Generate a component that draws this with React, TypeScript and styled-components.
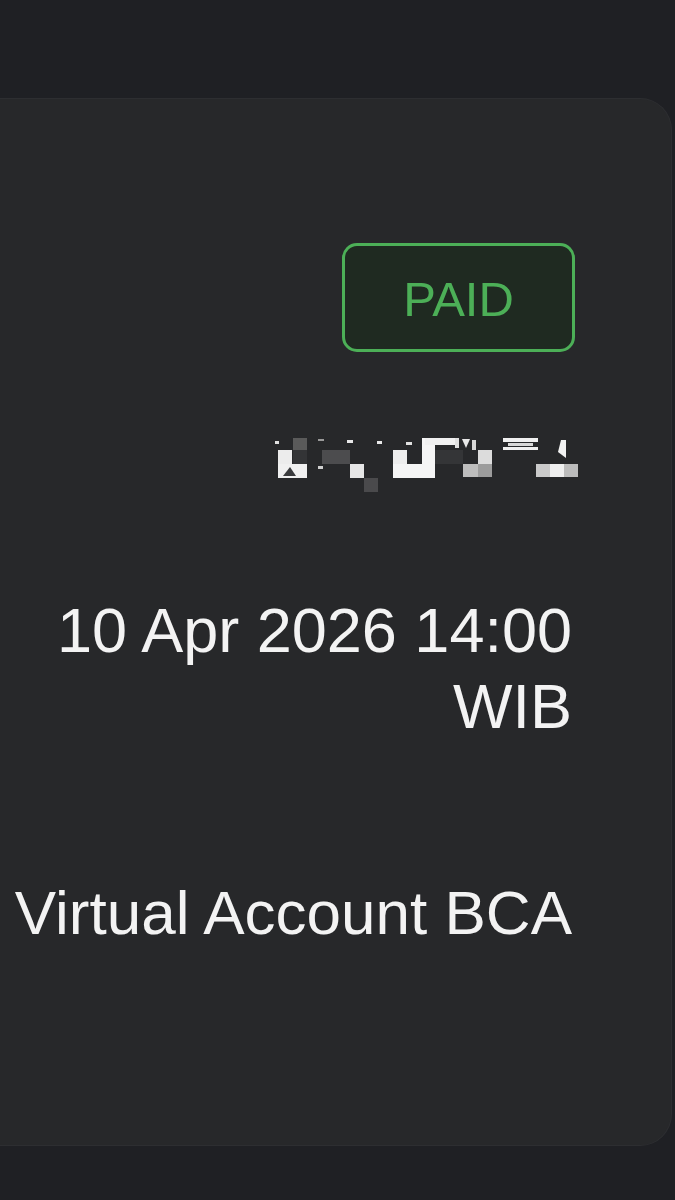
import React from "react";
import styled, { createGlobalStyle } from "styled-components";

const GlobalStyle = createGlobalStyle`
  html, body {
    margin: 0;
    padding: 0;
    background: #1f2024;
    overflow: hidden;
  }
  body {
    font-family: "Liberation Sans", Arial, Helvetica, sans-serif;
    -webkit-font-smoothing: antialiased;
  }
`;

const Page = styled.div`
  width: 675px;
  height: 1200px;
  display: flex;
  flex-direction: column;
  background: #1f2024;
`;

const Card = styled.section`
  margin: 98px 3px 0 -40px;
  padding: 144px 99px 194px 0;
  background: #27282a;
  border: 1px solid #2d2e31;
  border-left: none;
  border-radius: 0 32px 32px 0;
  display: flex;
  flex-direction: column;
  align-items: flex-end;
`;

const Row = styled.div<{ $gap: number }>`
  margin-top: ${(p) => p.$gap}px;
  display: flex;
  justify-content: flex-end;
`;

const Badge = styled.div`
  box-sizing: border-box;
  width: 233px;
  height: 109px;
  margin-right: -3px;
  padding-top: 4px;
  border: 3px solid #4caf57;
  border-radius: 15px;
  background: #1f2a21;
  color: #4caf57;
  font-size: 49px;
  line-height: 1;
  display: flex;
  align-items: center;
  justify-content: center;
`;

const Masked = styled.svg`
  display: block;
  width: 310px;
  height: 65px;
  margin-right: -8px;
`;

const Value = styled.div<{ $size: number; $maxWidth?: number }>`
  max-width: ${(p) => (p.$maxWidth ? `${p.$maxWidth}px` : "none")};
  color: #f3f3f3;
  font-size: ${(p) => p.$size}px;
  line-height: 76px;
  text-align: right;
  white-space: ${(p) => (p.$maxWidth ? "normal" : "nowrap")};
`;

type Block = [number, number, number, number, string];

const blocks: Block[] = [
  [278, 450, 14, 14, "#ececec"],
  [278, 464, 29, 14, "#f0f0f0"],
  [293, 438, 14, 12, "#5a5a5a"],
  [293, 450, 14, 14, "#333436"],
  [322, 450, 28, 14, "#4c4c4e"],
  [350, 464, 14, 14, "#e6e6e6"],
  [364, 478, 14, 14, "#4a4a4c"],
  [393, 450, 14, 14, "#ededed"],
  [393, 464, 42, 14, "#f5f5f5"],
  [422, 438, 13, 26, "#f5f5f5"],
  [435, 450, 28, 14, "#343537"],
  [478, 450, 14, 14, "#dcdcdc"],
  [463, 464, 15, 13, "#bdbdbd"],
  [478, 464, 14, 13, "#9c9c9c"],
  [536, 464, 14, 13, "#cacaca"],
  [550, 464, 14, 13, "#efefef"],
  [564, 464, 14, 13, "#bcbcbc"],
];

const MaskedText = () => (
  <Masked viewBox="270 430 310 65" aria-label="masked value">
    {blocks.map(([x, y, w, h, c], i) => (
      <rect key={i} x={x} y={y} width={w} height={h} fill={c} />
    ))}
    <polygon points="283,476 290,467 296,476" fill="#3a3b3d" />
    <rect x="275" y="441" width="4" height="3" fill="#e0e0e0" />
    <rect x="318" y="439" width="6" height="2" fill="#9a9a9a" />
    <rect x="347" y="440" width="6" height="3" fill="#e8e8e8" />
    <rect x="377" y="441" width="5" height="3" fill="#e8e8e8" />
    <rect x="406" y="442" width="6" height="3" fill="#e0e0e0" />
    <rect x="318" y="466" width="5" height="3" fill="#cfcfcf" />
    <rect x="425" y="438" width="30" height="7" fill="#f0f0f0" />
    <rect x="455" y="438" width="4" height="10" fill="#e0e0e0" />
    <polygon points="462,439 470,439 466,448" fill="#e8e8e8" />
    <rect x="472" y="440" width="4" height="10" fill="#d8d8d8" />
    <rect x="503" y="438" width="35" height="4" fill="#f0f0f0" />
    <rect x="508" y="443" width="25" height="3" fill="#d8d8d8" />
    <rect x="503" y="447" width="35" height="3" fill="#f0f0f0" />
    <polygon points="561,440 566,440 566,458 558,452" fill="#f2f2f2" />
  </Masked>
);

export default function App() {
  return (
    <>
      <GlobalStyle />
      <Page>
        <Card>
          <Row $gap={0}>
            <Badge>PAID</Badge>
          </Row>
          <Row $gap={78}>
            <MaskedText />
          </Row>
          <Row $gap={97}>
            <Value $size={63} $maxWidth={560}>
              10 Apr 2026 14:00 WIB
            </Value>
          </Row>
          <Row $gap={131}>
            <Value $size={62}>Virtual Account BCA</Value>
          </Row>
        </Card>
      </Page>
    </>
  );
}
